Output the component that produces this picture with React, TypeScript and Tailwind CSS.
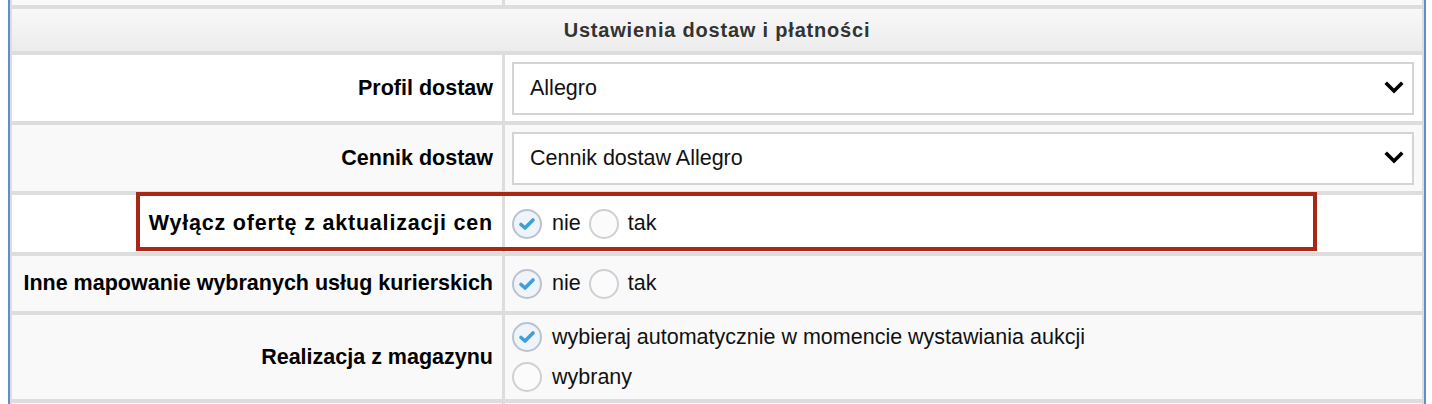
import React from "react";

function Chevron() {
  return (
    <svg width="20" height="14" viewBox="0 0 20 14" className="shrink-0">
      <polyline points="3,3 10,10 17,3" fill="none" stroke="#000" strokeWidth="3.6" strokeLinecap="square" />
    </svg>
  );
}

function Radio({ checked }: { checked?: boolean }) {
  return (
    <span
      className={`flex h-[30px] w-[30px] shrink-0 items-center justify-center rounded-full border-2 ${
        checked ? "border-[#b8c3cf] bg-[#eef4fa]" : "border-[#cdd1d5] bg-[#fbfbfb]"
      }`}
    >
      {checked && (
        <svg width="18" height="16" viewBox="0 0 18 16">
          <polyline points="3,8.5 7,12 15,4" fill="none" stroke="#3f9fd9" strokeWidth="3.6" strokeLinecap="round" strokeLinejoin="round" />
        </svg>
      )}
    </span>
  );
}

function Label({ text, bg = "bg-white", h, extra = "" }: { text: string; bg?: string; h: string; extra?: string }) {
  return (
    <div className={`${bg} ${h} ${extra} flex items-center justify-end pr-[9px] text-[21.5px] font-bold text-black`}>
      {text}
    </div>
  );
}

function Select({ value }: { value: string }) {
  return (
    <div className="flex h-[53px] items-center justify-between border-2 border-[#d4d4d4] bg-white pl-[16px] pr-[8px] text-[21.5px] text-[#111]">
      <span>{value}</span>
      <Chevron />
    </div>
  );
}

function YesNo() {
  return (
    <div className="flex items-center text-[21.5px] text-[#111]">
      <Radio checked />
      <span className="ml-[10px] mr-[8px]">nie</span>
      <Radio />
      <span className="ml-[9px]">tak</span>
    </div>
  );
}

export default function App() {
  return (
    <div className="min-h-[404px] bg-white font-['Liberation_Sans',Arial,sans-serif]">
      <div className="relative ml-[8px] h-[404px] w-[1418px] overflow-hidden border-x-2 border-[#5b8fd0] bg-[#dddddd] px-[2px]">
        <div className="grid grid-cols-[490px_917px] gap-x-[3px] gap-y-[4px]">
          <div className="h-[5px] bg-[#f9f9f9]" />
          <div className="h-[5px] bg-[#f9f9f9]" />

          <div className="col-span-2 flex h-[42px] items-center justify-center bg-gradient-to-b from-[#f8f8f8] to-[#ececec] text-[20px] font-bold tracking-[0.8px] text-[#333]">
            Ustawienia dostaw i płatności
          </div>

          <Label text="Profil dostaw" h="h-[66px]" />
          <div className="flex h-[66px] items-center bg-white pl-[7px] pr-[8px]">
            <div className="w-full">
              <Select value="Allegro" />
            </div>
          </div>

          <Label text="Cennik dostaw" bg="bg-[#f9f9f9]" h="h-[66px]" />
          <div className="flex h-[66px] items-center bg-[#f9f9f9] pl-[7px] pr-[8px]">
            <div className="w-full">
              <Select value="Cennik dostaw Allegro" />
            </div>
          </div>

          <Label text="Wyłącz ofertę z aktualizacji cen" h="h-[57px]" extra="tracking-[0.8px]" />
          <div className="flex h-[57px] items-center bg-white pl-[7px]">
            <YesNo />
          </div>

          <Label text="Inne mapowanie wybranych usług kurierskich" bg="bg-[#f9f9f9]" h="h-[55px]" />
          <div className="flex h-[55px] items-center bg-[#f9f9f9] pl-[7px]">
            <YesNo />
          </div>

          <Label text="Realizacja z magazynu" bg="bg-[#f9f9f9]" h="h-[84px]" />
          <div className="flex h-[84px] flex-col justify-center gap-[7px] bg-[#f9f9f9] pl-[7px] text-[21.5px] text-[#111]">
            <div className="flex items-center">
              <Radio checked />
              <span className="ml-[10px]">wybieraj automatycznie w momencie wystawiania aukcji</span>
            </div>
            <div className="flex items-center">
              <Radio />
              <span className="ml-[10px]">wybrany</span>
            </div>
          </div>

          <div className="h-[20px] bg-[#f9f9f9]" />
          <div className="h-[20px] bg-[#f9f9f9]" />
        </div>

        <div className="pointer-events-none absolute left-[126px] top-[192px] h-[59px] w-[1181px] border-4 border-[#a82818]" />
      </div>
    </div>
  );
}
